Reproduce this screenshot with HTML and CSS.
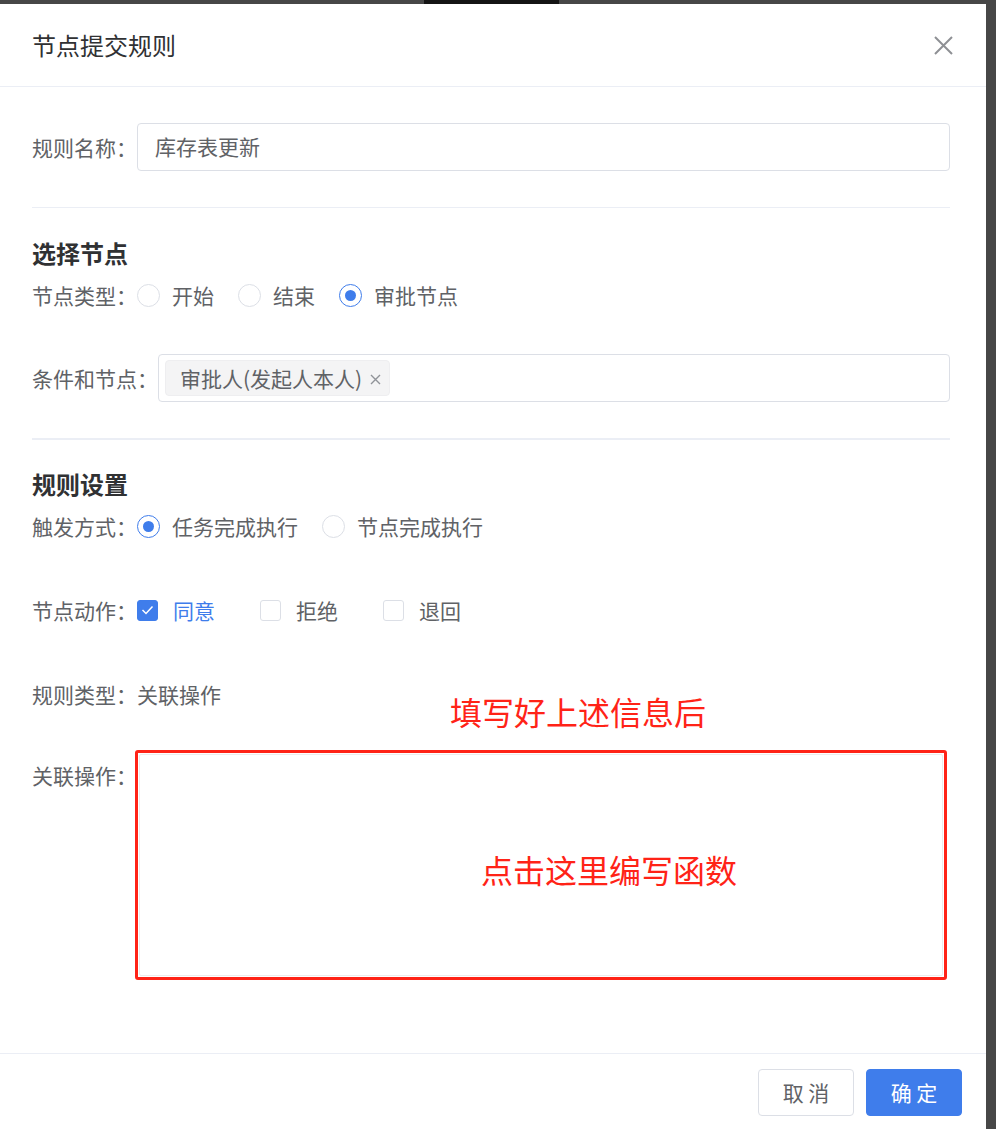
FILE: index.html
```html
<!DOCTYPE html>
<html lang="zh-CN">
<head>
<meta charset="utf-8">
<title>节点提交规则</title>
<link rel="stylesheet" href="styles.css">
</head>
<body>
<div class="backdrop-bar"></div>
<div class="modal">
  <div class="modal-header">
    <div class="modal-title">节点提交规则</div>
    <svg class="close" width="19" height="19" viewBox="0 0 19 19"><path d="M1 1L18 18M18 1L1 18" stroke="#8e9094" stroke-width="2" fill="none"/></svg>
  </div>
  <div class="modal-body">
    <div class="row row-input">
      <span class="label">规则名称：</span>
      <div class="input">库存表更新</div>
    </div>
    <div class="divider"></div>

    <div class="section">选择节点</div>
    <div class="row row-line first">
      <span class="label">节点类型：</span>
      <span class="radio"><span class="radio-circle"></span><span class="opt-text">开始</span></span>
      <span class="radio"><span class="radio-circle"></span><span class="opt-text">结束</span></span>
      <span class="radio checked"><span class="radio-circle"></span><span class="opt-text">审批节点</span></span>
    </div>
    <div class="row row-select">
      <span class="label">条件和节点：</span>
      <div class="select">
        <span class="tag">审批人(发起人本人)<svg class="tag-close" width="11" height="11" viewBox="0 0 11 11"><path d="M1 1L10 10M10 1L1 10" stroke="#909399" stroke-width="1.4" fill="none"/></svg></span>
      </div>
    </div>
    <div class="divider thick"></div>

    <div class="section second">规则设置</div>
    <div class="row row-line first">
      <span class="label">触发方式：</span>
      <span class="radio checked"><span class="radio-circle"></span><span class="opt-text">任务完成执行</span></span>
      <span class="radio"><span class="radio-circle"></span><span class="opt-text">节点完成执行</span></span>
    </div>
    <div class="row row-line spaced">
      <span class="label">节点动作：</span>
      <span class="checkbox checked"><span class="box"><svg width="13" height="10" viewBox="0 0 13 10"><path d="M1.5 5L5 8.5L11.5 1.5" stroke="#fff" stroke-width="1.5" fill="none"/></svg></span><span class="opt-text">同意</span></span>
      <span class="checkbox"><span class="box"></span><span class="opt-text">拒绝</span></span>
      <span class="checkbox"><span class="box"></span><span class="opt-text">退回</span></span>
    </div>
    <div class="row row-line spaced">
      <span class="label">规则类型：</span>
      <span class="value">关联操作</span>
    </div>
    <div class="note note-top">填写好上述信息后</div>
    <div class="row row-relation">
      <span class="label label-top">关联操作：</span>
      <div class="highlight">
        <div class="editor">
          <div class="note note-inner">点击这里编写函数</div>
        </div>
      </div>
    </div>
  </div>
  <div class="modal-footer">
    <button class="btn btn-default">取 消</button>
    <button class="btn btn-primary">确 定</button>
  </div>
</div>
</body>
</html>
```

FILE: styles.css
```css
html, body {
  margin: 0;
  padding: 0;
}
body {
  background: #474747;
  font-family: "Noto Sans CJK SC", "Noto Sans", sans-serif;
  height: 1129px;
  overflow: hidden;
  position: relative;
}
.backdrop-bar {
  position: absolute;
  left: 424px;
  top: 0;
  width: 135px;
  height: 4px;
  background: #141414;
}
.modal {
  margin-top: 4px;
  width: 986px;
  height: 1125px;
  background: #fff;
  display: flex;
  flex-direction: column;
  box-sizing: border-box;
}
.modal-header {
  height: 83px;
  box-sizing: border-box;
  border-bottom: 1px solid #ebeef5;
  display: flex;
  align-items: center;
  justify-content: space-between;
  padding: 0 33px 0 32px;
}
.modal-title {
  font-size: 24px;
  line-height: 32px;
  color: #303133;
}
.close {
  display: block;
}
.modal-body {
  flex: 1;
  padding: 35px 36px 0 32px;
  position: relative;
}
.row {
  display: flex;
  align-items: center;
}
.label {
  font-size: 21px;
  color: #606266;
  white-space: nowrap;
}
.row-input {
  height: 48px;
  margin-top: 1px;
}
.input {
  flex: 1;
  height: 48px;
  box-sizing: border-box;
  border: 1px solid #dcdfe6;
  border-radius: 4px;
  padding-left: 17px;
  font-size: 21px;
  line-height: 44px;
  color: #606266;
}
.divider {
  height: 1px;
  background: #ebeef5;
  margin-top: 36px;
}
.divider.thick {
  height: 2px;
}
.section {
  margin-top: 31px;
  font-size: 24px;
  line-height: 28px;
  font-weight: bold;
  color: #303133;
}
.section.second {
  margin-top: 30px;
}
.row-line {
  height: 28px;
}
.row-line.first {
  margin-top: 14px;
}
.row-line.spaced {
  margin-top: 56px;
}
.opt-text {
  font-size: 21px;
  color: #606266;
  line-height: 28px;
}
.radio {
  display: flex;
  align-items: center;
  margin-right: 24px;
}
.radio-circle {
  width: 23px;
  height: 23px;
  box-sizing: border-box;
  border: 1px solid #dcdfe6;
  border-radius: 50%;
  margin-right: 12px;
  display: flex;
  align-items: center;
  justify-content: center;
}
.radio.checked .radio-circle {
  border: 1.5px solid #3f7deb;
}
.radio.checked .radio-circle::after {
  content: "";
  width: 11px;
  height: 11px;
  border-radius: 50%;
  background: #3f7deb;
}
.checkbox {
  display: flex;
  align-items: center;
  margin-right: 45px;
}
.box {
  width: 21px;
  height: 21px;
  box-sizing: border-box;
  border: 1px solid #dcdfe6;
  border-radius: 3px;
  margin-right: 15px;
  display: flex;
  align-items: center;
  justify-content: center;
}
.checkbox.checked .box {
  background: #3f7deb;
  border-color: #3f7deb;
}
.checkbox.checked .opt-text {
  color: #3f7deb;
}
.row-select {
  margin-top: 45px;
  height: 48px;
}
.select {
  flex: 1;
  height: 48px;
  box-sizing: border-box;
  border: 1px solid #dcdfe6;
  border-radius: 4px;
  padding: 5px 6px;
  display: flex;
  align-items: center;
}
.tag {
  height: 36px;
  box-sizing: border-box;
  background: #f4f4f5;
  border: 1px solid #eeeef0;
  border-radius: 4px;
  padding: 0 8px 0 14px;
  display: flex;
  align-items: center;
  font-size: 21px;
  color: #606266;
  line-height: 32px;
}
.tag-close {
  margin-left: 8px;
  margin-top: 3px;
}
.value {
  font-size: 21px;
  color: #606266;
}
.row-relation {
  margin-top: 42px;
  align-items: flex-start;
}
.label-top {
  line-height: 48px;
  margin-top: 1px;
  width: 103px;
}
.highlight {
  width: 812px;
  height: 230px;
  box-sizing: border-box;
  border: 3px solid #ff2317;
  border-radius: 3px;
  padding: 1px;
}
.editor {
  height: 100%;
  box-sizing: border-box;
  border: 1px solid #ececec;
  border-radius: 2px;
  padding: 94px 0 0 341px;
}
.note {
  color: #ff2317;
  font-size: 32px;
  line-height: 40px;
  white-space: nowrap;
}
.note-top {
  position: absolute;
  left: 450px;
  top: 604px;
}
.modal-footer {
  border-top: 1px solid #ebeef5;
  padding: 15px 24px 0 0;
  height: 76px;
  box-sizing: border-box;
  display: flex;
  justify-content: flex-end;
  align-items: flex-start;
  gap: 12px;
}
.btn {
  height: 47px;
  width: 96px;
  box-sizing: border-box;
  border-radius: 4px;
  font-family: "Noto Sans CJK SC", "Noto Sans", sans-serif;
  font-size: 21px;
  line-height: 43px;
  padding: 0;
  cursor: pointer;
}
.btn-default {
  background: #fff;
  border: 1px solid #dcdfe6;
  color: #606266;
}
.btn-primary {
  background: #3f7deb;
  border: 1px solid #3f7deb;
  color: #fff;
}
```
